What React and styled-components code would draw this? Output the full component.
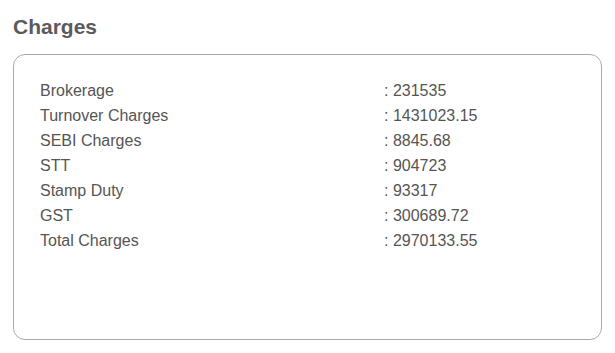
import React from "react";
import styled, { createGlobalStyle } from "styled-components";

const GlobalStyle = createGlobalStyle`
	body {
		margin: 0;
		background: #fff;
		font-family: "Liberation Sans", Arial, sans-serif;
	}
`;

const charges = [
	{ label: "Brokerage", value: "231535" },
	{ label: "Turnover Charges", value: "1431023.15" },
	{ label: "SEBI Charges", value: "8845.68" },
	{ label: "STT", value: "904723" },
	{ label: "Stamp Duty", value: "93317" },
	{ label: "GST", value: "300689.72" },
	{ label: "Total Charges", value: "2970133.55" },
];

export default function App() {
	return (
		<>
			<GlobalStyle />
			<Page>
				<Title>Charges</Title>
				<Card>
					{charges.map((row) => (
						<Row key={row.label}>
							<Label>{row.label}</Label>
							<Value>: {row.value}</Value>
						</Row>
					))}
				</Card>
			</Page>
		</>
	);
}

const Page = styled.div`
	width: 615px;
	height: 353px;
	box-sizing: border-box;
	padding: 15px 13px 13px;
	display: flex;
	flex-direction: column;
`;

const Title = styled.h2`
	margin: 0 0 15px;
	font-size: 21px;
	line-height: 24px;
	font-weight: bold;
	color: #5b5b5b;
`;

const Card = styled.div`
	flex: 1;
	border: 1px solid #aaaaaa;
	border-radius: 12px;
	padding: 23px 26px;
	box-sizing: border-box;
`;

const Row = styled.div`
	display: grid;
	grid-template-columns: 344px 1fr;
	font-size: 16px;
	line-height: 25px;
	color: #555555;
`;

const Label = styled.span``;

const Value = styled.span``;
